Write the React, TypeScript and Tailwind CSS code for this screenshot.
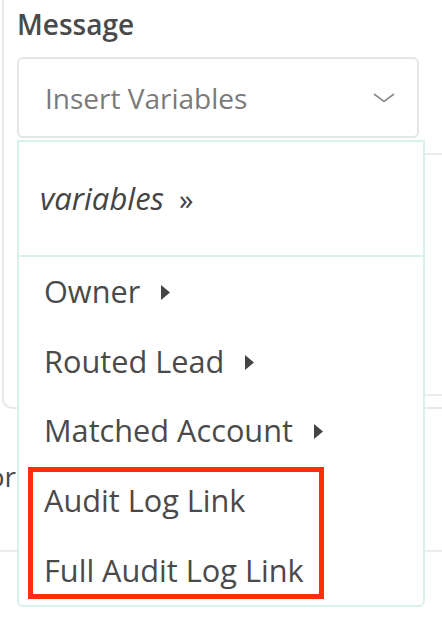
const items = [
  { label: "Owner", sub: true },
  { label: "Routed Lead", sub: true },
  { label: "Matched Account", sub: true },
  { label: "Audit Log Link", sub: false },
  { label: "Full Audit Log Link", sub: false },
];

function Caret() {
  return (
    <svg width="9" height="15" viewBox="0 0 9 15" className="ml-[21px] shrink-0 mt-[2px]">
      <polygon points="0,0 9,7.5 0,15" fill="#444" />
    </svg>
  );
}

export default function App() {
  return (
    <div className="relative w-[442px] h-[620px] overflow-hidden bg-white text-[#4a4a4a] font-['Open_Sans',sans-serif]">
      {/* form card behind the menu */}
      <div className="ml-[2px] h-[409px] border-l-2 border-b-2 border-[#e9e9e9] rounded-bl-[10px] pl-[13px] pt-[10px]">
        <div className="h-[28px] text-[28px] leading-[28px] font-semibold">Message</div>
        <div className="mt-[19px] w-[402px] h-[81px] border-2 border-[#e6e6e6] rounded-[6px] flex items-center justify-between pl-[26px] pr-[22px]">
          <span className="text-[28px] leading-[28px] text-[#7a7a7a]">Insert Variables</span>
          <svg width="22" height="10" viewBox="0 0 22 10">
            <polyline points="1,1 11,8.5 21,1" fill="none" stroke="#8a8a8a" strokeWidth="1.6" />
          </svg>
        </div>
        <div className="mt-[15px] w-[520px] h-[243px] border-2 border-[#ebebeb] rounded-[6px]" />
      </div>

      <div className="mt-[53px] w-[16px] flex justify-end whitespace-nowrap text-[28px] leading-[28px]">
        Vendor
      </div>
      <div className="mt-[60px] border-t-2 border-[#ededed]" />

      {/* variables dropdown */}
      <div className="absolute left-[17px] top-[140px] w-[408px] h-[467px] border-2 border-[#d8f2e5] rounded-b-[6px] bg-white flex flex-col">
        <div className="h-[115px] shrink-0 flex items-center pl-[21px] border-b-2 border-[#d8f2e5]">
          <span className="italic text-[31px] leading-[31px] text-[#444]">variables</span>
          <span className="ml-[15px] text-[29px] leading-[29px] text-[#444]">»</span>
        </div>
        <div className="flex-1 flex flex-col">
          {items.map((it) => (
            <div key={it.label} className="flex-1 flex items-center pl-[25px]">
              <span className="text-[30.7px] leading-[31px]">{it.label}</span>
              {it.sub && <Caret />}
            </div>
          ))}
        </div>
      </div>

      {/* annotation box */}
      <div className="absolute left-[28px] top-[467px] w-[296px] h-[132px] border-[5px] border-[#ff2d0a]" />
    </div>
  );
}
